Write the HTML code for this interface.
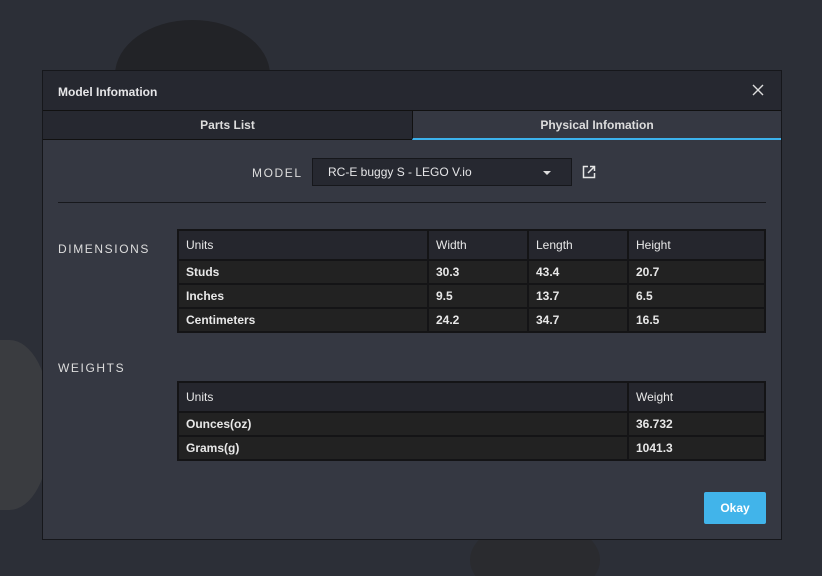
<!DOCTYPE html><html><head><style>
*{margin:0;padding:0;box-sizing:border-box}
html,body{width:822px;height:576px;overflow:hidden}
body{background:#2c2f37;font-family:"Liberation Sans",sans-serif;position:relative;color:#e6e6e8}
.a{position:absolute}
.dlg{left:42px;top:70px;width:740px;height:470px;background:#353842;border:1px solid #16171b}
.hd{left:0;top:0;width:738px;height:40px;background:#262830;border-bottom:1px solid #111}
.t{font-size:12px;font-weight:bold}
.tab{top:40px;height:29px;background:#262830;text-align:center;line-height:29px;font-size:12px;font-weight:bold;color:#ddd}
.lbl{font-size:12px;letter-spacing:1.6px;color:#ddd}
table{position:absolute;border-collapse:collapse;font-size:12px}
td{border:2px solid #141416;padding:0 7px;height:24px;background:#222222;font-weight:bold;color:#e8e8e8}
tr.h td{height:30px;background:#25262d;font-weight:normal}
</style></head><body>
<div class="a" style="left:115px;top:20px;width:155px;height:110px;border-radius:50%;background:#222327"></div>
<div class="a" style="left:-40px;top:340px;width:90px;height:170px;border-radius:45%;background:#3a3c40"></div>
<div class="a" style="left:470px;top:520px;width:130px;height:80px;border-radius:50%;background:#2a2b2f"></div>
<div class="a dlg">
<div class="a hd"><div class="a t" style="left:15px;top:14px">Model Infomation</div>
<svg class="a" style="left:709px;top:13px" width="12" height="12"><path d="M1 1L11 11M11 1L1 11" stroke="#ddd" stroke-width="1.4"/></svg></div>
<div class="a tab" style="left:0;width:369px;border-bottom:1px solid #111">Parts List</div>
<div class="a tab" style="left:369px;width:369px;background:#353842;border-left:1px solid #111;border-bottom:2px solid #3cb2ec">Physical Infomation</div>
<div class="a lbl" style="left:209px;top:95px">MODEL</div>
<div class="a" style="left:269px;top:87px;width:260px;height:28px;background:#262830;border:1px solid #16171b;font-size:12px;line-height:26px;padding-left:15px">RC-E buggy S - LEGO V.io
<div class="a" style="left:230px;top:12px;width:0;height:0;border-left:4px solid transparent;border-right:4px solid transparent;border-top:4px solid #ddd"></div></div>
<svg class="a" style="left:539px;top:94px" width="14" height="14"><path d="M6 1.5H1.5V12.5H12.5V8M8 1.5H12.5V6M12.5 1.5L6 8" fill="none" stroke="#e6e6e6" stroke-width="1.5"/></svg>
<div class="a" style="left:15px;top:131px;width:708px;height:1px;background:#17181c"></div>
<div class="a lbl" style="left:15px;top:171px">DIMENSIONS</div>
<div class="a lbl" style="left:15px;top:290px">WEIGHTS</div>
<table style="left:134px;top:158px;width:589px">
<tr class="h"><td style="width:250px">Units</td><td style="width:100px">Width</td><td style="width:100px">Length</td><td>Height</td></tr>
<tr><td>Studs</td><td>30.3</td><td>43.4</td><td>20.7</td></tr>
<tr><td>Inches</td><td>9.5</td><td>13.7</td><td>6.5</td></tr>
<tr><td>Centimeters</td><td>24.2</td><td>34.7</td><td>16.5</td></tr>
</table>
<table style="left:134px;top:310px;width:589px">
<tr class="h"><td style="width:450px">Units</td><td>Weight</td></tr>
<tr><td>Ounces(oz)</td><td>36.732</td></tr>
<tr><td>Grams(g)</td><td>1041.3</td></tr>
</table>
<div class="a" style="left:661px;top:421px;width:62px;height:32px;background:#41b4ea;border-radius:2px;text-align:center;line-height:32px;font-size:12px;font-weight:bold;color:#fff">Okay</div>
</div>
</body></html>
